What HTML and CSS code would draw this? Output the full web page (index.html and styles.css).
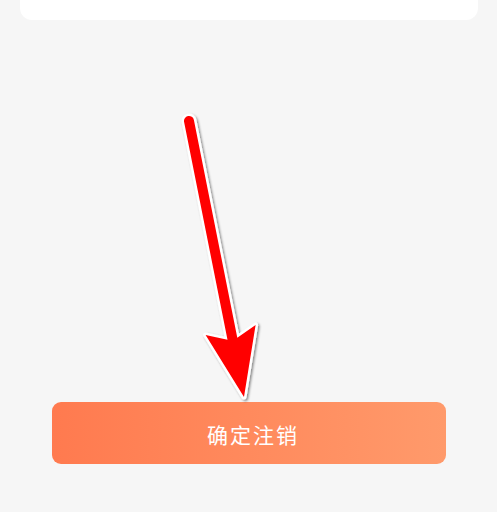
FILE: index.html
```html
<!DOCTYPE html>
<html lang="zh">
<head>
<meta charset="utf-8">
<link rel="stylesheet" href="styles.css">
</head>
<body>
<div class="page">
  <div class="card"></div>
  <div class="spacer"></div>
  <button class="confirm">确定注销</button>
</div>
<svg class="arrow" width="497" height="512" viewBox="0 0 497 512" xmlns="http://www.w3.org/2000/svg">
  <defs>
    <filter id="sh" x="-20%" y="-20%" width="140%" height="140%">
      <feDropShadow dx="1.5" dy="1.5" stdDeviation="1.2" flood-color="#000" flood-opacity="0.45"/>
    </filter>
    <path id="ar" d="M 193.9 120.0 L 237.3 337.8 L 255.6 325 L 244 397.1 L 205.6 335 L 227.5 339.8 L 184.1 122.0 A 5 5 0 0 1 193.9 120.0 Z"/>
  </defs>
  <use href="#ar" filter="url(#sh)" fill="#ffffff" stroke="#ffffff" stroke-width="5" stroke-linejoin="round"/>
  <use href="#ar" fill="#ff0000"/>
</svg>
</body>
</html>
```
FILE: styles.css
```css
html, body {
  margin: 0;
  padding: 0;
  background: #f6f6f6;
  width: 497px;
  height: 512px;
  overflow: hidden;
}
.page {
  display: flex;
  flex-direction: column;
  align-items: stretch;
}
.card {
  height: 20px;
  margin: 0 19px 0 20px;
  background: #ffffff;
  border-radius: 0 0 12px 12px;
}
.spacer {
  height: 382px;
}
.confirm {
  margin: 0 51px 0 52px;
  height: 62px;
  border: none;
  border-radius: 9px;
  background: linear-gradient(90deg, #ff7a4f 0%, #ff8a5d 50%, #ff9a6b 100%);
  color: #ffffff;
  font-family: "Noto Sans CJK SC", "Noto Sans", sans-serif;
  font-size: 21px;
  letter-spacing: 2px;
  padding: 2px 0 0 8px;
  cursor: pointer;
}
.arrow {
  position: absolute;
  left: 0;
  top: 0;
  pointer-events: none;
}
```
